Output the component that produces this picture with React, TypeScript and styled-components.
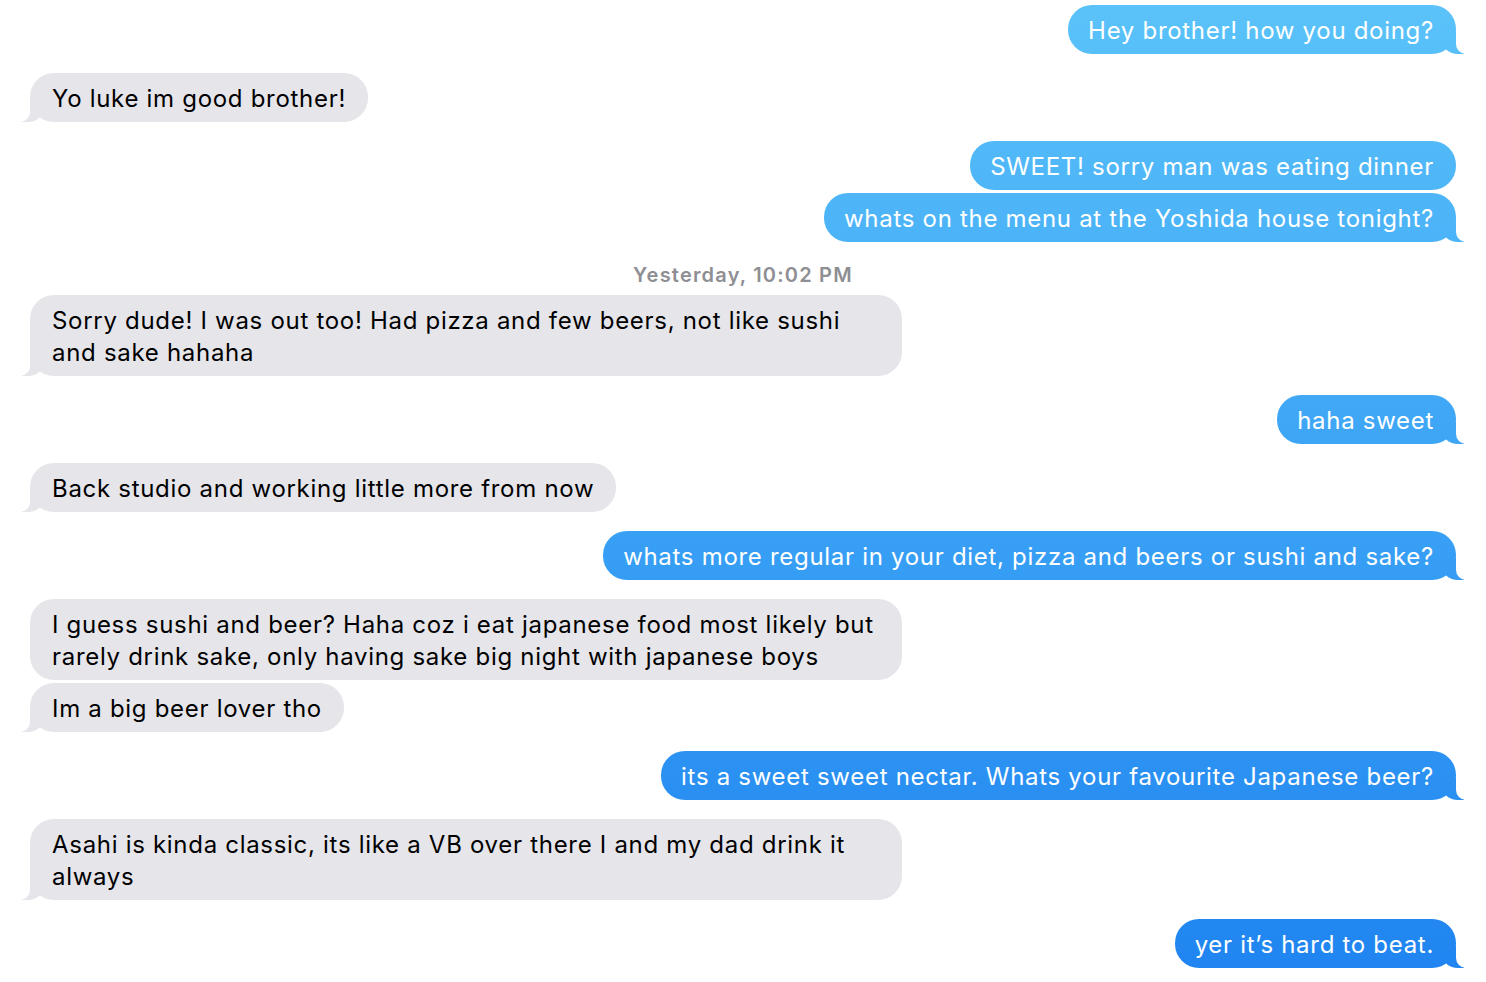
import React from "react";
import styled, { createGlobalStyle, css } from "styled-components";

const GlobalStyle = createGlobalStyle`
  html, body { margin: 0; padding: 0; background: #ffffff; }
  body {
    font-family: Inter, "Noto Sans", "Liberation Sans", sans-serif;
    -webkit-font-smoothing: antialiased;
  }
`;

const GRADIENT = "linear-gradient(180deg, #5bc3f9 0%, #3aa2f5 50%, #1f84f0 100%)";

const Thread = styled.div`
  display: flex;
  flex-direction: column;
  padding: 5px 30px 14px 30px;
  width: 1486px;
  box-sizing: border-box;
`;

const Stamp = styled.div`
  align-self: center;
  margin: 21px 0 8px 0;
  font-size: 20px;
  line-height: 24px;
  font-weight: 600;
  color: #8e8e93;
  letter-spacing: 1.2px;
`;

type Side = "me" | "them";

const Bubble = styled.div<{ $side: Side; $tail: boolean; $gap: number }>`
  position: relative;
  max-width: 828px;
  margin-top: ${(p) => p.$gap}px;
  padding: 10px 22px 7px 22px;
  border-radius: 24px;
  font-size: 24px;
  line-height: 32px;
  letter-spacing: 0.7px;
  box-sizing: content-box;
  ${(p) =>
    p.$side === "me"
      ? css`
          align-self: flex-end;
          padding-left: 20px;
          padding-right: 22px;
          color: #ffffff;
          background: ${GRADIENT};
          background-attachment: fixed;
        `
      : css`
          align-self: flex-start;
          color: #000000;
          background: #e5e5ea;
        `}
  ${(p) =>
    p.$tail &&
    (p.$side === "me"
      ? css`
          &::before {
            content: "";
            position: absolute;
            z-index: 0;
            bottom: 0;
            right: -8px;
            height: 22px;
            width: 22px;
            background: ${GRADIENT};
            background-attachment: fixed;
            border-bottom-left-radius: 16px 14px;
          }
          &::after {
            content: "";
            position: absolute;
            z-index: 1;
            bottom: 0;
            right: -10px;
            width: 10px;
            height: 22px;
            background: #ffffff;
            border-bottom-left-radius: 10px;
          }
        `
      : css`
          &::before {
            content: "";
            position: absolute;
            z-index: 0;
            bottom: 0;
            left: -8px;
            height: 22px;
            width: 22px;
            background: #e5e5ea;
            border-bottom-right-radius: 16px 14px;
          }
          &::after {
            content: "";
            position: absolute;
            z-index: 1;
            bottom: 0;
            left: -10px;
            width: 10px;
            height: 22px;
            background: #ffffff;
            border-bottom-right-radius: 10px;
          }
        `)}
`;

const Text = styled.span`
  position: relative;
  z-index: 2;
`;

type Item =
  | { kind: "msg"; side: Side; text: string }
  | { kind: "stamp"; text: string };

const items: Item[] = [
  { kind: "msg", side: "me", text: "Hey brother! how you doing?" },
  { kind: "msg", side: "them", text: "Yo luke im good brother!" },
  { kind: "msg", side: "me", text: "SWEET! sorry man was eating dinner" },
  { kind: "msg", side: "me", text: "whats on the menu at the Yoshida house tonight?" },
  { kind: "stamp", text: "Yesterday, 10:02 PM" },
  {
    kind: "msg",
    side: "them",
    text: "Sorry dude! I was out too! Had pizza and few beers, not like sushi and sake hahaha",
  },
  { kind: "msg", side: "me", text: "haha sweet" },
  { kind: "msg", side: "them", text: "Back studio and working little more from now" },
  {
    kind: "msg",
    side: "me",
    text: "whats more regular in your diet, pizza and beers or sushi and sake?",
  },
  {
    kind: "msg",
    side: "them",
    text: "I guess sushi and beer? Haha coz i eat japanese food most likely but rarely drink sake, only having sake big night with japanese boys",
  },
  { kind: "msg", side: "them", text: "Im a big beer lover tho" },
  {
    kind: "msg",
    side: "me",
    text: "its a sweet sweet nectar. Whats your favourite Japanese beer?",
  },
  {
    kind: "msg",
    side: "them",
    text: "Asahi is kinda classic, its like a VB over there I and my dad drink it always",
  },
  { kind: "msg", side: "me", text: "yer it\u2019s hard to beat." },
];

export default function App() {
  return (
    <>
      <GlobalStyle />
      <Thread>
        {items.map((it, i) => {
          if (it.kind === "stamp") return <Stamp key={i}>{it.text}</Stamp>;
          const prev = items[i - 1];
          const next = items[i + 1];
          const samePrev = prev && prev.kind === "msg" && prev.side === it.side;
          const sameNext = next && next.kind === "msg" && next.side === it.side;
          const gap = i === 0 || (prev && prev.kind === "stamp") ? 0 : samePrev ? 3 : 19;
          return (
            <Bubble key={i} $side={it.side} $tail={!sameNext} $gap={gap}>
              <Text>{it.text}</Text>
            </Bubble>
          );
        })}
      </Thread>
    </>
  );
}
